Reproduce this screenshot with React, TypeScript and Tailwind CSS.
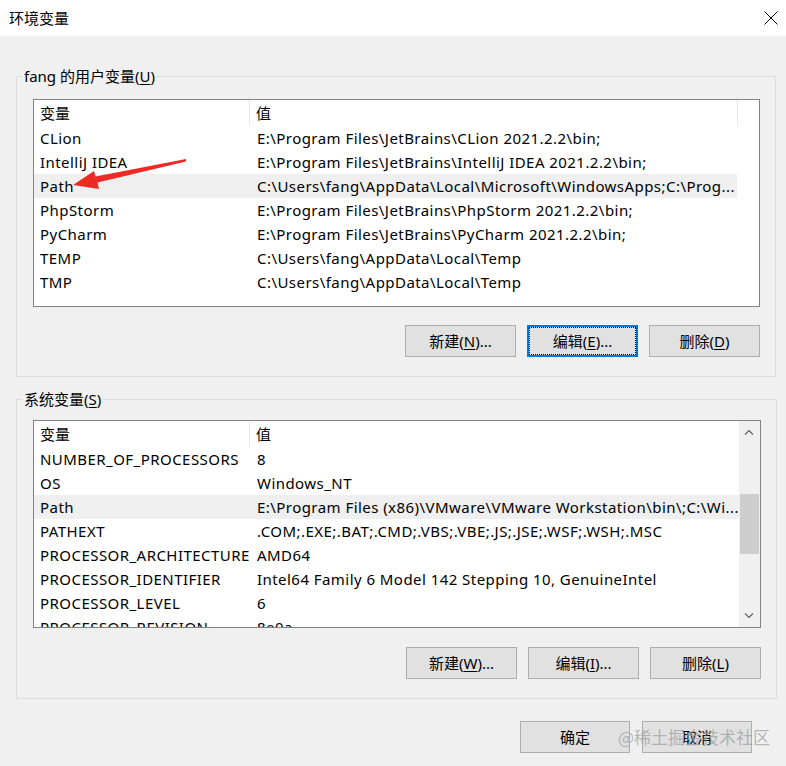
import React from 'react';

type Row = { name: string; value: string };

const USER_VARS: Row[] = [
  { name: 'CLion', value: 'E:\\Program Files\\JetBrains\\CLion 2021.2.2\\bin;' },
  { name: 'IntelliJ IDEA', value: 'E:\\Program Files\\JetBrains\\IntelliJ IDEA 2021.2.2\\bin;' },
  { name: 'Path', value: 'C:\\Users\\fang\\AppData\\Local\\Microsoft\\WindowsApps;C:\\Prog...' },
  { name: 'PhpStorm', value: 'E:\\Program Files\\JetBrains\\PhpStorm 2021.2.2\\bin;' },
  { name: 'PyCharm', value: 'E:\\Program Files\\JetBrains\\PyCharm 2021.2.2\\bin;' },
  { name: 'TEMP', value: 'C:\\Users\\fang\\AppData\\Local\\Temp' },
  { name: 'TMP', value: 'C:\\Users\\fang\\AppData\\Local\\Temp' },
];

const SYSTEM_VARS: Row[] = [
  { name: 'NUMBER_OF_PROCESSORS', value: '8' },
  { name: 'OS', value: 'Windows_NT' },
  { name: 'Path', value: 'E:\\Program Files (x86)\\VMware\\VMware Workstation\\bin\\;C:\\Wi...' },
  { name: 'PATHEXT', value: '.COM;.EXE;.BAT;.CMD;.VBS;.VBE;.JS;.JSE;.WSF;.WSH;.MSC' },
  { name: 'PROCESSOR_ARCHITECTURE', value: 'AMD64' },
  { name: 'PROCESSOR_IDENTIFIER', value: 'Intel64 Family 6 Model 142 Stepping 10, GenuineIntel' },
  { name: 'PROCESSOR_LEVEL', value: '6' },
  { name: 'PROCESSOR_REVISION', value: '8e0a' },
];

function Chevron({ up }: { up?: boolean }) {
  return (
    <svg width="10" height="6" viewBox="0 0 10 6" fill="none" stroke="#606060" strokeWidth="1.2">
      {up ? <polyline points="1,5.5 5,1.5 9,5.5" /> : <polyline points="1,0.5 5,4.5 9,0.5" />}
    </svg>
  );
}

function VarList({ rows, selected, scroll }: { rows: Row[]; selected: number; scroll?: boolean }) {
  return (
    <div className="h-[208px] border border-[#828282] bg-white flex overflow-hidden">
      <div className="flex-1 flex flex-col overflow-hidden">
        {/* header */}
        <div className="h-[26px] flex shrink-0 items-center">
          <div className="w-[216px] h-full flex items-center pl-[6px] pt-[1px] border-r border-[#e5e5e5]">变量</div>
          <div className="flex-1 pl-[6px] pt-[1px]">值</div>
        </div>
        {rows.map((r, i) => (
          <div
            key={r.name}
            className={`h-[24px] shrink-0 flex items-center pt-[1px] whitespace-nowrap tracking-[0.45px] ${i === selected ? 'bg-[#efefef]' : ''}`}
          >
            <div className="w-[216px] pl-[6px] overflow-hidden">{r.name}</div>
            <div className="flex-1 pl-[7px] overflow-hidden">{r.value}</div>
          </div>
        ))}
      </div>
      {scroll ? (
        <div className="w-[21px] bg-[#f0f0f0] flex flex-col">
          <div className="h-[22px] flex items-center justify-center">
            <Chevron up />
          </div>
          <div className="h-[51px]" />
          <div className="h-[60px] mx-[1px] bg-[#cdcdcd]" />
          <div className="flex-1" />
          <div className="h-[22px] flex items-center justify-center">
            <Chevron />
          </div>
        </div>
      ) : (
        <div className="w-[22px]">
          <div className="h-[26px] border-l border-[#e5e5e5]" />
        </div>
      )}
    </div>
  );
}

function Btn({ label, mn, suffix = '', focus, w = 'w-[111px]' }: { label: string; mn?: string; suffix?: string; focus?: boolean; w?: string }) {
  const text = (
    <span className="whitespace-nowrap">
      {label}
      {mn && (
        <>
          (<span className="underline underline-offset-2">{mn}</span>)
        </>
      )}
      {suffix}
    </span>
  );
  if (focus) {
    return (
      <button className={`${w} h-[32px] bg-[#e1e1e1] border-2 border-[#0078d7] p-0`}>
        <div className="w-full h-full border border-dotted border-black flex items-center justify-center">{text}</div>
      </button>
    );
  }
  return (
    <button className={`${w} h-[32px] bg-[#e1e1e1] border border-[#adadad] flex items-center justify-center`}>{text}</button>
  );
}

function Group({ title, mn, children }: { title: string; mn: string; children: React.ReactNode }) {
  return (
    <fieldset className="ml-[16px] mr-[10px] border border-[#dcdcdc]">
      <legend className="ml-[5px] px-[2px] h-[20px] leading-[20px]">
        {title}(<span className="underline underline-offset-2">{mn}</span>)
      </legend>
      <div className="pl-[16px] pr-[15px] pb-[19px]">{children}</div>
    </fieldset>
  );
}

export default function App() {
  return (
    <div className="relative w-[786px] h-[766px] bg-[#f0f0f0] flex flex-col text-[15px] text-black font-['Noto_Sans','Noto_Sans_CJK_SC',sans-serif] overflow-hidden">
      {/* title bar */}
      <div className="h-[36px] bg-white flex items-center justify-between pl-[9px] pr-[8px] shrink-0">
        <span className="font-['Noto_Sans_CJK_SC',sans-serif]">环境变量</span>
        <svg width="14" height="14" viewBox="0 0 14 14" stroke="#000" strokeWidth="1">
          <line x1="0.5" y1="0.5" x2="13.5" y2="13.5" />
          <line x1="13.5" y1="0.5" x2="0.5" y2="13.5" />
        </svg>
      </div>

      <div className="pt-[30px] flex flex-col">
        <Group title="fang 的用户变量" mn="U">
          <div className="mt-[13px]">
            <VarList rows={USER_VARS} selected={2} />
          </div>
          <div className="mt-[18px] flex justify-end gap-[11px]">
            <Btn label="新建" mn="N" suffix="..." />
            <Btn label="编辑" mn="E" suffix="..." focus />
            <Btn label="删除" mn="D" />
          </div>
        </Group>

        <div className="mt-[12px]">
          <Group title="系统变量" mn="S">
            <div className="mt-[11px]">
              <VarList rows={SYSTEM_VARS} selected={2} scroll />
            </div>
            <div className="mt-[19px] flex justify-end gap-[11px]">
              <Btn label="新建" mn="W" suffix="..." />
              <Btn label="编辑" mn="I" suffix="..." />
              <Btn label="删除" mn="L" />
            </div>
          </Group>
        </div>

        <div className="mt-[22px] flex justify-end gap-[12px] pr-[34px]">
          <Btn label="确定" w="w-[110px]" />
          <Btn label="取消" w="w-[110px]" />
        </div>
      </div>

      {/* red annotation arrow */}
      <svg className="absolute left-0 top-0 pointer-events-none" width="786" height="766">
        <polygon
          fill="#ee2a24"
          points="73,185 94,171 95.5,176.5 186,159 186,161.5 97.5,182.5 99,189"
        />
      </svg>

      {/* watermark */}
      <div className="absolute left-[618px] top-[724px] text-[17px] text-[#a0a0a0]/75 font-['Noto_Sans_CJK_SC',sans-serif] pointer-events-none whitespace-nowrap">
        @稀土掘金技术社区
      </div>
    </div>
  );
}
